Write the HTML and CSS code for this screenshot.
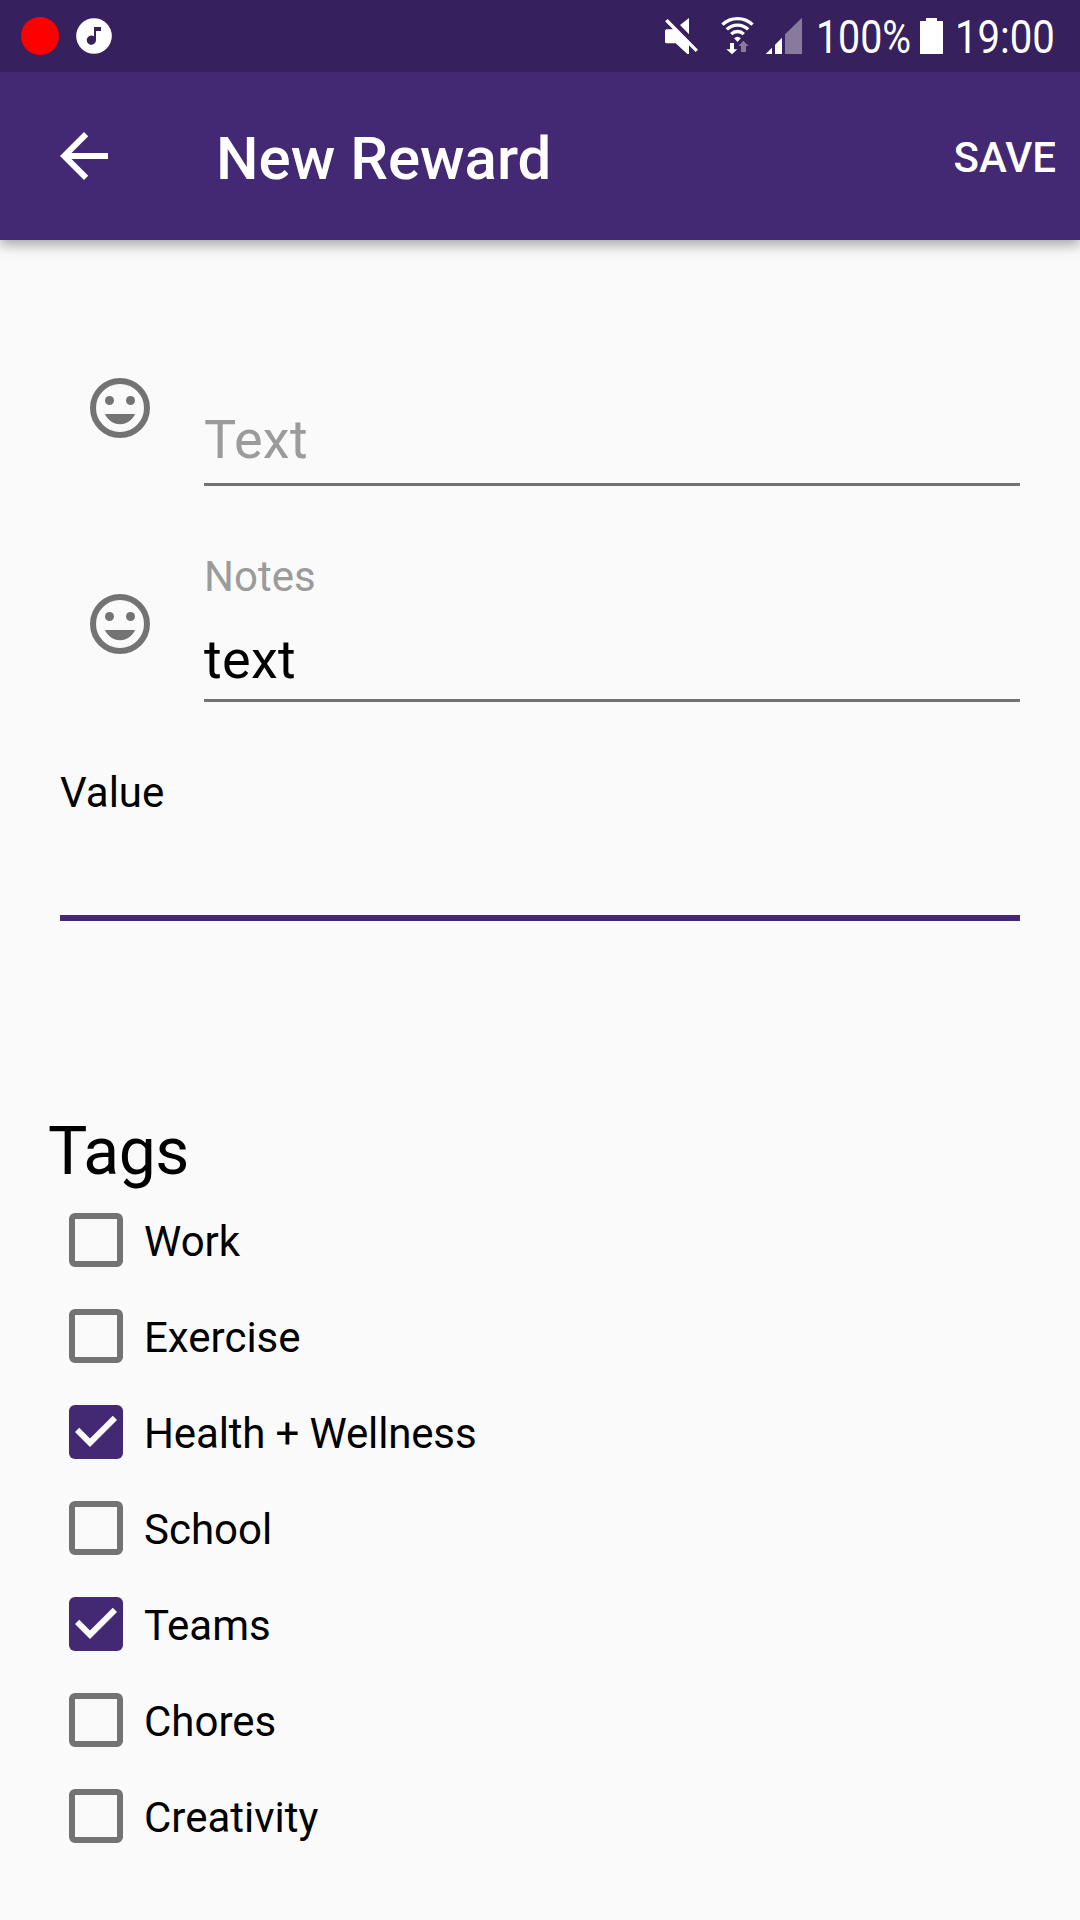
FILE: index.html
```html
<!DOCTYPE html>
<html lang="en">
<head>
<meta charset="utf-8">
<title>New Reward</title>
<link rel="stylesheet" href="styles.css">
</head>
<body>
<div class="status">
  <div class="status-group">
    <span class="record"></span>
    <svg class="music" viewBox="228 54 108 108"><circle cx="282" cy="108" r="53.5" fill="#fff"/><path d="M282 81h21v12h-15v28a14 14 0 1 1-6-12z" fill="#36205d"/></svg>
  </div>
  <div class="status-group status-right">
    <svg class="mute" viewBox="75 0 102 216" fill="#fff"><path d="M83 57l91 92-7 7-92-92zM147 54v49l-27-28zM80 88h22l45 46v28h-5l-35-32H80q-5 0-5-5V93q0-5 5-5z"/></svg>
    <svg class="wifi" viewBox="243 0 99 216"><g fill="none" stroke="#fff" stroke-width="10"><path d="M247.3 74a65.5 65.5 0 0 1 90.4 0M260.4 88a46.5 46.5 0 0 1 64.2 0M273.6 102.3a27 27 0 0 1 37.8 0"/></g><path d="M292.500 126l-10-11q10-9 20 0z" fill="#fff"/><path d="M270 129h12v19h10l-16 15-17-15h11z" fill="#fff"/><path d="M310 122l16 16h-8v18h-15v-18h-8z" fill="#887a9d"/></svg>
    <svg class="signal" viewBox="375 0 111 216" fill="#fff"><path d="M377 162l19-19v19zM405 162v-28l21-21v49z"/><path d="M435 162v-59l51-50v109z" fill="#887a9d"/></svg>
    <span class="condensed percent">100%</span>
    <svg class="battery" viewBox="840 0 69 216" fill="#fff"><path d="M840 63h18v-9h33v9h18v99h-69z"/></svg>
    <span class="condensed clock">19:00</span>
  </div>
</div>
<header class="appbar">
  <svg class="back" viewBox="0 0 24 24" fill="#fff"><path d="M20 11H7.830l5.590-5.590L12 4l-8 8 8 8 1.410-1.410L7.830 13H20z"/></svg>
  <h1 class="title">New Reward</h1>
  <span class="save">SAVE</span>
</header>
<main class="form">
  <div class="row">
    <svg class="smile" viewBox="0 0 24 24"><circle cx="12" cy="12" r="9" fill="none" stroke="#737373" stroke-width="2"/><g fill="#737373"><circle cx="8.500" cy="9.500" r="1.500"/><circle cx="15.500" cy="9.500" r="1.500"/><path d="M7 14h10c-.8 2-2.700 3.400-5 3.400S7.800 16 7 14z"/></g></svg>
    <div class="field"><div class="label"></div><div class="input hint">Text</div></div>
  </div>
  <div class="row">
    <svg class="smile" viewBox="0 0 24 24"><circle cx="12" cy="12" r="9" fill="none" stroke="#737373" stroke-width="2"/><g fill="#737373"><circle cx="8.500" cy="9.500" r="1.500"/><circle cx="15.500" cy="9.500" r="1.500"/><path d="M7 14h10c-.8 2-2.700 3.400-5 3.400S7.800 16 7 14z"/></g></svg>
    <div class="field"><div class="label">Notes</div><div class="input">text</div></div>
  </div>
  <div class="value">Value</div>
</main>
<section class="tags">
  <h2 class="tags-title">Tags</h2>
  <div class="tag"><span class="box"></span><span class="tag-label">Work</span></div>
  <div class="tag"><span class="box"></span><span class="tag-label">Exercise</span></div>
  <div class="tag"><span class="box checked"><svg class="tick" viewBox="3 3 18 18"><path d="M10 17l-5-5 1.410-1.410L10 14.170l7.590-7.590L19 8z" fill="#fafafa"/></svg></span><span class="tag-label tight">Health + Wellness</span></div>
  <div class="tag"><span class="box"></span><span class="tag-label">School</span></div>
  <div class="tag"><span class="box checked"><svg class="tick" viewBox="3 3 18 18"><path d="M10 17l-5-5 1.410-1.410L10 14.170l7.590-7.590L19 8z" fill="#fafafa"/></svg></span><span class="tag-label">Teams</span></div>
  <div class="tag"><span class="box"></span><span class="tag-label">Chores</span></div>
  <div class="tag"><span class="box"></span><span class="tag-label">Creativity</span></div>
</section>
</body>
</html>
```
FILE: styles.css
```css
* { box-sizing: border-box; }
body {
  margin: 0;
  width: 1080px;
  height: 1920px;
  overflow: hidden;
  background: #fafafa;
  color: #000;
  font-family: Roboto, sans-serif;
  font-size: 42px;
}
svg { display: block; flex: none; }
h1, h2 { margin: 0; }

.status {
  position: relative;
  z-index: 1;
  display: flex;
  justify-content: space-between;
  height: 72px;
  padding: 0 23px 0 21px;
  background: #36205d;
}
.status-group { display: flex; align-items: center; }
.record { width: 38px; height: 38px; margin-right: 17px; border-radius: 50%; background: #f00; }
.music { width: 36px; height: 36px; }
.mute { width: 34px; height: 72px; margin-right: 22px; }
.wifi { width: 33px; height: 72px; margin-right: 11px; }
.signal { width: 37px; height: 72px; margin-right: 14px; }
.percent { width: 98px; margin-right: 6px; }
.battery { width: 23px; height: 72px; margin-right: 12px; }
.clock { width: 102px; }
.condensed {
  padding-top: 2px;
  color: #fff;
  font-size: 46px;
  line-height: 72px;
  white-space: nowrap;
  transform: scaleX(.855);
  transform-origin: 0 50%;
}
.clock { transform: scaleX(.872); }

.appbar {
  display: flex;
  align-items: center;
  height: 168px;
  padding: 0 24px 0 48px;
  background: #432874;
  color: #fff;
  box-shadow: 0 5px 12px rgba(0, 0, 0, .34);
}
.back { width: 72px; height: 72px; }
.title { flex: 1; padding: 5px 0 0 96px; font-size: 60px; font-weight: 500; line-height: 72px; }
.save { padding-top: 4px; font-weight: 500; line-height: 50px; }

.form { padding: 60px 60px 0; }
.row { display: flex; align-items: center; height: 216px; padding-left: 24px; }
.smile { width: 72px; height: 72px; margin-right: 48px; }
.field { flex: 1; height: 150px; border-bottom: 3px solid #737373; margin-top: 6px; }
.label { height: 72px; line-height: 49px; color: #9b9b9b; }
.input { height: 72px; font-size: 54px; line-height: 71px; letter-spacing: .3px; }
.hint { line-height: 63px; color: #9b9b9b; }
.value { height: 153px; margin-top: 36px; line-height: 49px; border-bottom: 6px solid #432874; }

.tags { padding: 190px 48px 0; }
.tags-title { height: 81px; font-size: 66px; font-weight: 400; line-height: 81px; letter-spacing: -.5px; }
.tag { display: flex; align-items: center; height: 96px; padding: 0 0 0 21px; line-height: 50px; }
.tag-label { padding-top: 4px; }
.tight { letter-spacing: -.15px; }
.box { width: 54px; height: 54px; margin-right: 21px; border: 6px solid #737373; border-radius: 6px; }
.checked { border: 0; background: #432874; }
.tick { width: 54px; height: 54px; }
```
